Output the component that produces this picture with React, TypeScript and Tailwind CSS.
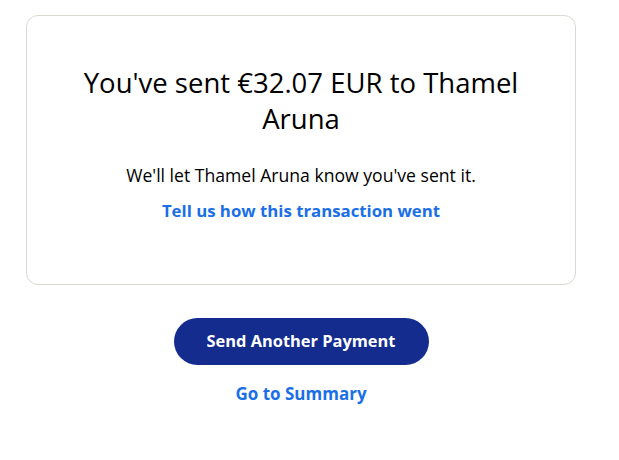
export default function App() {
  return (
    <div className="min-h-[460px] w-[619px] bg-white pt-[15px] font-['Open_Sans','Noto_Sans',sans-serif] text-black">
      <div className="ml-[26px] flex h-[270px] w-[550px] flex-col items-center rounded-[12px] border border-[#dbd8d0] pt-[49px]">
        <h1 className="w-[470px] text-center text-[27.5px] leading-[36px] font-normal">
          You've sent €32.07 EUR to Thamel Aruna
        </h1>
        <p className="mt-[26px] text-[17.6px] leading-[24px]">We'll let Thamel Aruna know you've sent it.</p>
        <a href="#" className="mt-[12px] text-[16.8px] leading-[24px] font-bold text-[#1a6fe8]">
          Tell us how this transaction went
        </a>
      </div>
      <div className="ml-[26px] mt-[33px] flex w-[550px] flex-col items-center">
        <button className="h-[47px] w-[255px] rounded-full bg-[#142c8e] text-[16.4px] font-bold text-white">
          Send Another Payment
        </button>
        <a href="#" className="mt-[17px] text-[17px] leading-[24px] font-bold text-[#1a6fe8]">
          Go to Summary
        </a>
      </div>
    </div>
  )
}
